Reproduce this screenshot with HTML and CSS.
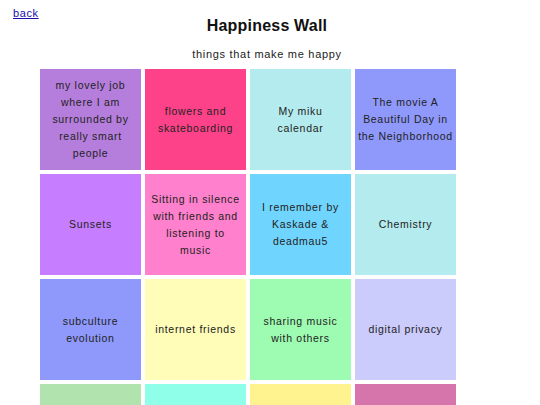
FILE: index.html
```html
<!DOCTYPE html>
<html>
<head>
<meta charset="utf-8">
<title>Happiness Wall</title>
<link rel="stylesheet" href="styles.css">
</head>
<body>
<a class="back" href="#">back</a>
<header class="head">
  <h1 class="title">Happiness Wall</h1>
  <p class="subtitle">things that make me happy</p>
</header>
<main class="wall">
  <div class="note c1">my lovely job where I am surrounded by really smart people</div>
  <div class="note c2">flowers and skateboarding</div>
  <div class="note c3 narrow">My miku calendar</div>
  <div class="note c4">The movie A Beautiful Day in the Neighborhood</div>
  <div class="note c5">Sunsets</div>
  <div class="note c6">Sitting in silence with friends and listening to music</div>
  <div class="note c7">I remember by Kaskade &amp; deadmau5</div>
  <div class="note c3">Chemistry</div>
  <div class="note c4">subculture evolution</div>
  <div class="note c8">internet friends</div>
  <div class="note c9">sharing music with others</div>
  <div class="note c10">digital privacy</div>
  <div class="note c11"></div>
  <div class="note c12"></div>
  <div class="note c13"></div>
  <div class="note c14"></div>
</main>
</body>
</html>
```
FILE: styles.css
```css
html, body {
  margin: 0;
  padding: 0;
  background: #ffffff;
  overflow: hidden;
}
body {
  font-family: "Liberation Sans", Arial, sans-serif;
  color: #1a1a1a;
  height: 405px;
}
.back {
  position: absolute;
  left: 13px;
  top: 7px;
  font-size: 11px;
  color: #1a0dab;
  text-decoration: underline;
  letter-spacing: 0.6px;
}
.head {
  margin-right: 6px;
  text-align: center;
  padding-top: 16px;
}
.title {
  margin: 0;
  font-size: 16px;
  font-weight: bold;
  letter-spacing: 0.2px;
  line-height: 20px;
  color: #111;
}
.subtitle {
  margin: 11px 0 0 0;
  font-size: 11px;
  letter-spacing: 0.7px;
  line-height: 14px;
  color: #222;
}
.wall {
  margin: 8px 0 0 40px;
  display: grid;
  grid-template-columns: repeat(4, 101px);
  grid-auto-rows: 101px;
  gap: 4px;
}
.note {
  display: flex;
  align-items: center;
  justify-content: center;
  text-align: center;
  padding: 0 2px;
  font-size: 10.5px;
  line-height: 17px;
  letter-spacing: 0.7px;
  color: #222;
}
.narrow { padding: 0 6px; }
.c1 { background: #b57edc; padding: 0 8px; }
.c2 { background: #fe4289; }
.c3 { background: #b4ebee; }
.c4 { background: #8f99fb; }
.c5 { background: #c77dff; }
.c6 { background: #ff80cc; padding: 0 5px; }
.c7 { background: #70d5fe; }
.c8 { background: #fffdb8; }
.c9 { background: #9dfcb1; padding: 0 10px; }
.c10 { background: #cbcbfc; }
.c11 { background: #b0e3ad; }
.c12 { background: #8fffe9; }
.c13 { background: #fff38f; }
.c14 { background: #d675ab; }
```
